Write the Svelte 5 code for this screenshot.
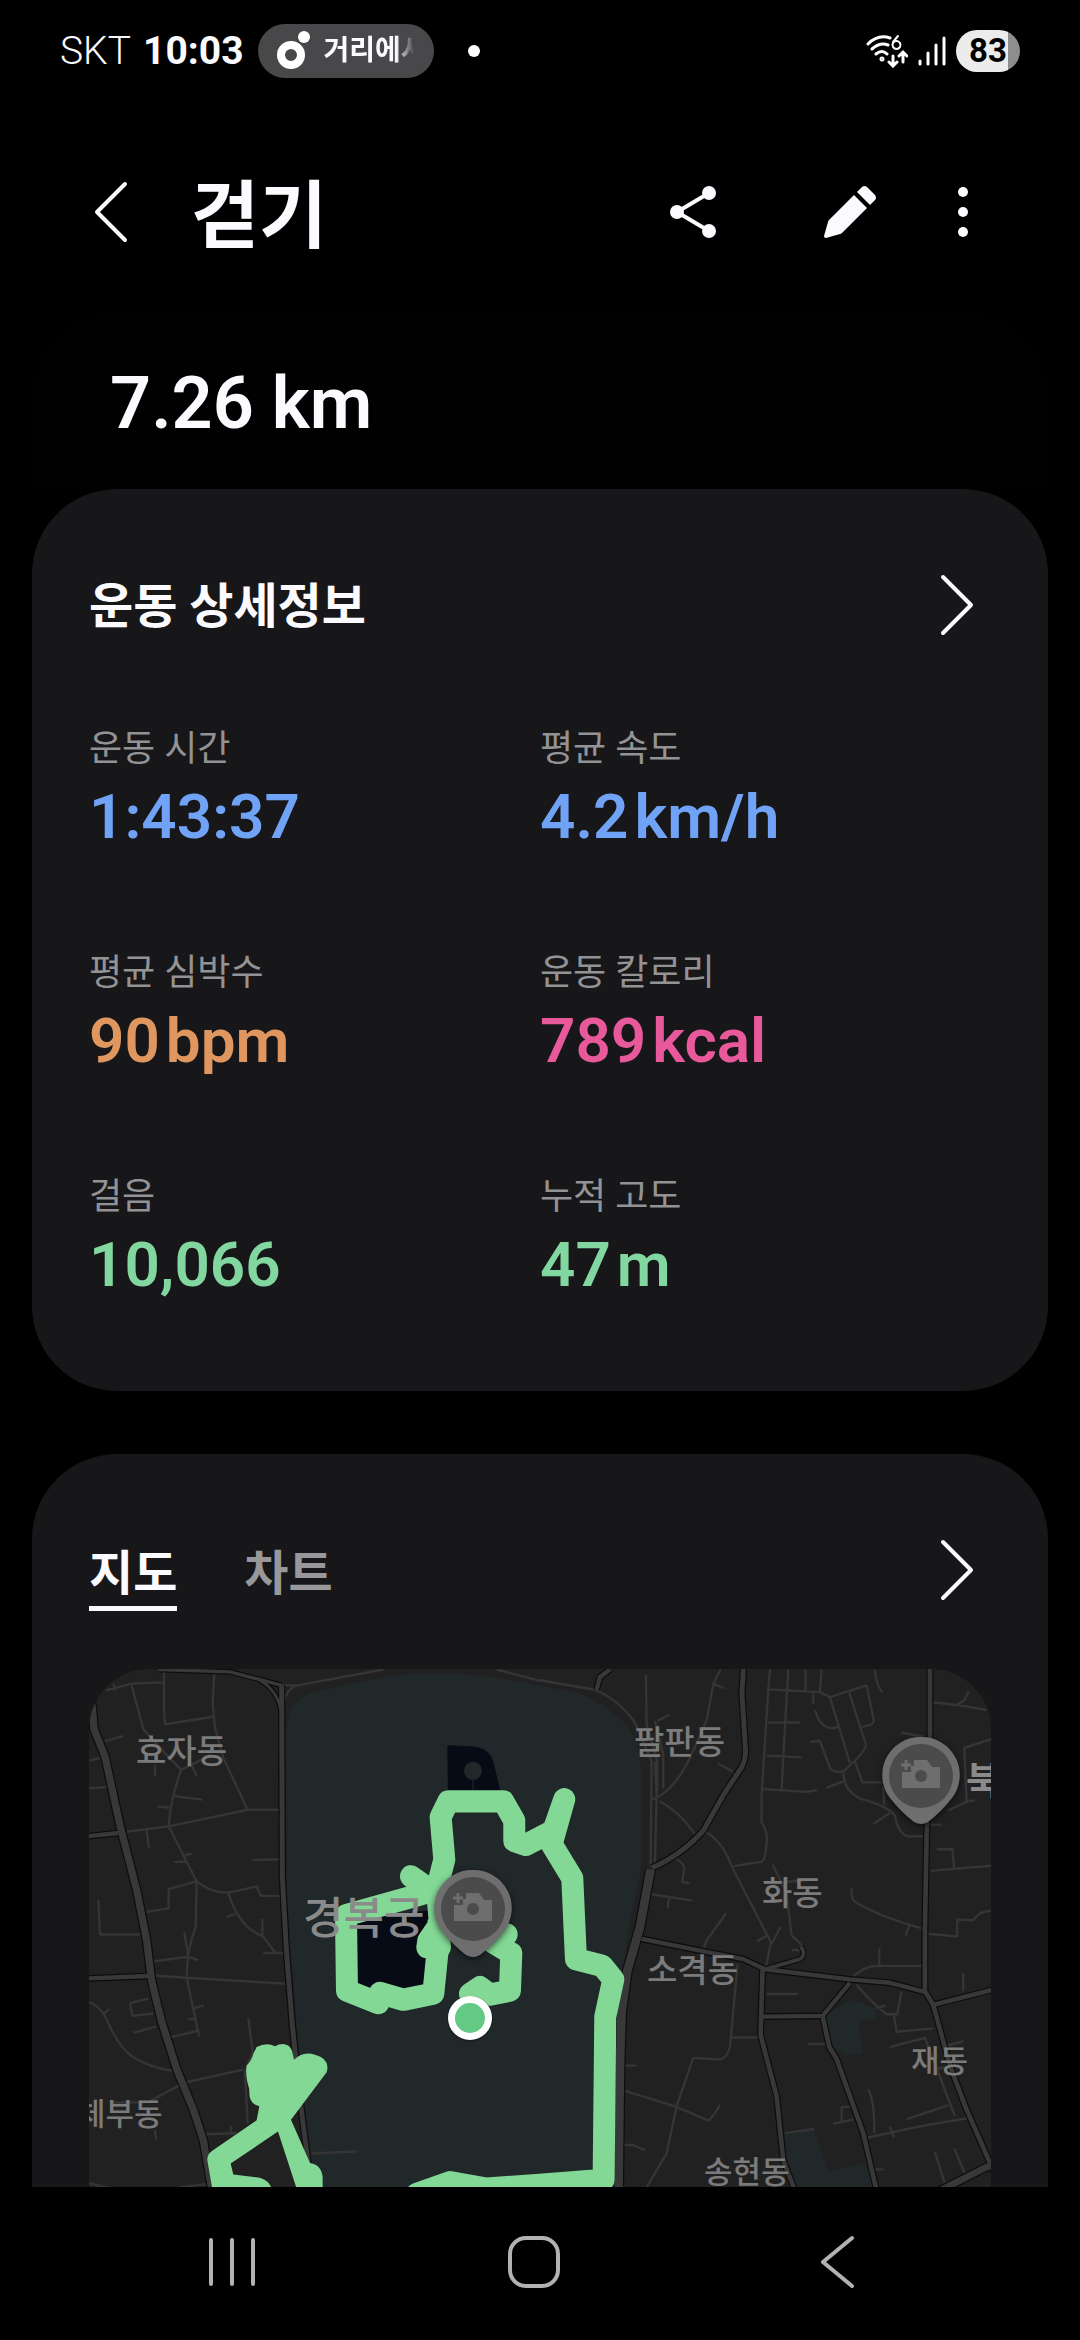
<script lang="ts">
  interface Stat {
    label: string;
    value: string;
    unit?: string;
    tone: string;
  }

  const stats: Stat[] = [
    { label: '운동 시간', value: '1:43:37', tone: 'blue' },
    { label: '평균 속도', value: '4.2', unit: 'km/h', tone: 'blue' },
    { label: '평균 심박수', value: '90', unit: 'bpm', tone: 'orange' },
    { label: '운동 칼로리', value: '789', unit: 'kcal', tone: 'pink' },
    { label: '걸음', value: '10,066', tone: 'green' },
    { label: '누적 고도', value: '47', unit: 'm', tone: 'green' }
  ];

  const tabs = ['지도', '차트'];
  let activeTab = $state('지도');

  // [path, width]
  const westRoads: [string, number][] = [
    ['M25 60L38 150L42 205L75 285L120 490L170 680L200 830L215 950L245 1070L290 1210L340 1330L370 1420L396 1570L410 1900', 22],
    ['M0 524L115 512', 13],
    ['M0 943L205 935', 13],
    ['M605 75L607 640L620 870L637 1080L660 1300L690 1530L730 1900', 15],
    ['M235 28L450 35L605 75', 10],
    ['M540 60Q592 90 603 150', 9]
  ];

  const eastRoads: [string, number][] = [
    ['M210 28L180 50L170 88', 13],
    ['M1170 0V230L1160 520L1155 800V980L1180 1020L1230 1200L1280 1330L1400 1600', 14],
    ['M1180 1020L1400 965', 13],
    ['M668 915L662 1110L710 1290L730 1480L765 1570L800 1900', 14],
    ['M668 1055L848 1053L930 955', 13],
    ['M848 1053L868 1145L890 1180L970 1400L1010 1570L1060 1900', 14],
    ['M675 915L780 885Q800 872 783 848', 11],
    ['M305 825L480 860L610 885L675 915L930 945L1050 955L1155 982', 13],
    ['M612 0L606 100L617 270Q616 305 598 328L550 400L490 505Q420 580 335 615', 15],
    ['M332 620L300 790L262 920L245 1040L240 1200L232 1900', 26],
    ['M1200 1570L1340 1500L1400 1480', 20]
  ];

  const westLanes = [
    'M78 90L155 70L250 66M252 28V150L255 190L400 168M403 40L398 125L405 200L430 290L503 443H600',
    'M155 75L190 205L250 270L303 325L395 280M75 240L130 225M27 298L60 290M27 380L80 376M100 70L105 90',
    'M303 325Q270 420 266 492L140 508M266 492L503 443M285 403L368 413M233 433L268 437M225 310V345M335 310L350 343',
    'M266 492L350 655L347 790Q320 860 320 940L358 1115M200 505L206 555M283 598L318 596M315 577L335 573M517 592L600 590',
    'M350 655Q395 690 445 688L530 670L543 698H600M350 655L266 678V735L200 745M445 688Q475 790 550 818L585 865M547 765V818M440 760L465 752M550 867H615',
    'M55 710L60 812H180M218 892L325 878L355 888M313 805L325 878M215 933L320 940L620 958M150 1015L205 1002M150 1015L157 1053L220 1046M343 1030L372 1022M325 1063L350 1062M160 1103L228 1085M265 1118L358 1096',
    'M27 1012Q65 1025 85 1075Q120 1150 160 1175Q210 1205 275 1215M72 1045L88 1033M315 1250L490 1212M505 1060L518 1160L495 1220L503 1370M95 1310L205 1308L300 1257M375 1403L470 1400M453 1378V1400M225 1390L228 1418M27 1548Q80 1562 130 1570M695 1460L828 1454M385 1550L300 1560',
    'M610 125Q625 75 665 73L910 28M605 75H665M1250 28L1380 62'
  ];

  const eastLanes = [
    'M0 60L165 88Q240 120 285 185L335 300L332 610M345 180L370 280V380M345 300L350 400L345 605M318 42L320 190L352 300V390',
    'M542 28L520 70L500 180L450 290Q400 390 338 412M520 70L552 83M352 180L390 162M360 418Q420 450 465 515M535 307L578 330M498 508Q550 540 575 610L693 835L678 910',
    'M690 28L685 90L665 400V480Q685 510 680 540Q678 590 665 597L580 610M688 87L840 95L870 110L980 75M745 28L735 200L725 382M797 28V90M845 28L840 95M685 185H780M680 283L785 288M670 382L800 390L832 385',
    'M870 110L930 305M825 148Q845 215 895 198M820 95V130M928 97L978 250Q980 270 910 330Q880 335 870 318L840 240L810 242M980 75L1002 180Q1000 195 965 197M945 300L967 362H1030M858 378L910 360M1005 30Q1005 60 1027 97M1085 215L1150 227',
    'M910 330Q910 385 960 410Q1040 430 1065 460Q1075 520 1110 522H1155M1030 375L1033 430M1000 485L1050 453M1180 125L1250 133L1340 148M1250 133L1272 120L1287 93M1360 232L1273 260L1280 420L1225 445M1305 415L1280 420M1170 487H1205',
    'M408 590Q435 600 432 620L427 657L448 660M335 693L457 712M387 705L383 735M558 750L500 830L490 855M698 605L740 690L755 815Q795 850 788 858H755M722 790L695 840M650 833L680 815M700 660L810 650',
    'M1190 560H1238L1242 615M1172 624L1360 608M937 675Q930 700 945 715Q1020 760 1150 795M1108 785L1097 815M1165 810L1252 818V768L1300 770Q1320 740 1360 742M935 940Q975 905 1010 905H1150M1018 853V905M1270 927V980M680 988H775',
    'M950 960Q990 1010 1040 1048H1072L1085 980M1010 1030L1038 1022M1062 1050L1070 1100L1180 1090M1050 1145L1155 1118L1245 1350M1100 1358L1225 1318M975 1415L1140 1380L1285 1355M985 1270Q1005 1310 1003 1400M1050 1380L1062 1413M1190 1210L1240 1200M1225 1140L1270 1128',
    'M593 900L570 1145Q560 1180 540 1182L460 1177L410 1320L380 1460L320 1560M570 1117H655M805 1136H855M250 1200H290M240 1270L410 1322L505 1363Q525 1345 540 1316M240 1435H280L315 1450M735 1400L823 1387M880 1372L940 1360M905 1365V1322H930M1185 1455L1215 1550M1243 1445L1275 1520M1005 1507H1032'
  ];

  const labels = [
    { text: '효자동', x: 47, y: 94, size: 'mid' },
    { text: '체부동', x: -12, y: 456, size: 'small' },
    { text: '팔판동', x: 545, y: 85, size: 'mid' },
    { text: '화동', x: 673, y: 236, size: 'mid' },
    { text: '소격동', x: 558, y: 313, size: 'mid' },
    { text: '재동', x: 822, y: 403, size: 'small' },
    { text: '송현동', x: 615, y: 514, size: 'small' },
    { text: '경복궁', x: 214, y: 265, size: 'large' },
    { text: '북', x: 877, y: 125, size: 'bold' }
  ];

  const pins = [
    { x: 384, y: 240 },
    { x: 832, y: 107 }
  ];
</script>

{#snippet chevron()}
  <svg class="chevron" viewBox="0 0 40 64" aria-hidden="true">
    <path d="M6 4L34 32L6 60" />
  </svg>
{/snippet}

<div class="screen">
  <div class="status-bar">
    <span class="carrier">SKT</span>
    <span class="clock">10:03</span>
    <div class="now-playing">
      <svg width="34" height="40" viewBox="0 0 34 40" aria-hidden="true">
        <circle cx="15" cy="24" r="10" fill="none" stroke="#fff" stroke-width="8" />
        <circle cx="28" cy="6" r="6" fill="#fff" />
      </svg>
      <span class="track">거리에서</span>
    </div>
    <span class="dot"></span>
    <div class="indicators">
      <svg width="42" height="34" viewBox="0 0 42 34" fill="none" stroke="#fff" stroke-width="3" stroke-linecap="round" aria-hidden="true">
        <path d="M2 10Q12 0 24 4M6 15Q14 8 22 11M10 20Q16 15 21 20" />
        <circle cx="16" cy="25" r="1" />
        <path d="M27 22V31M23 28L27 32L31 28M37 28V19M33 22L37 18L41 22" />
        <path d="M32 2L27 8M31 7a4 4 0 1 1 -1 0" stroke-width="2" />
      </svg>
      <svg width="28" height="30" viewBox="0 0 28 30" stroke="#fff" stroke-width="3" stroke-linecap="round" aria-hidden="true">
        <path d="M2 25V28M10 17V28M18 9V28M26 2V28" />
      </svg>
      <span class="battery">83</span>
    </div>
  </div>

  <header>
    <button class="back" aria-label="뒤로">
      <svg class="chevron" viewBox="0 0 40 64" aria-hidden="true">
        <path d="M34 4L6 32L34 60" />
      </svg>
    </button>
    <h1>걷기</h1>
    <button aria-label="공유">
      <svg width="52" height="56" viewBox="0 0 52 56" aria-hidden="true">
        <path d="M42 9L10 28L42 47" fill="none" stroke="#fafaff" stroke-width="4" />
        <g fill="#fafaff">
          <circle cx="42" cy="9" r="7" />
          <circle cx="10" cy="28" r="7" />
          <circle cx="42" cy="47" r="7" />
        </g>
      </svg>
    </button>
    <button aria-label="편집">
      <svg width="54" height="54" viewBox="0 0 54 54" fill="#fafaff" aria-hidden="true">
        <path d="M31 10L44 23L19 48Q18 49 17 49L3 53Q1 53 1 51L5 37Q5 36 6 35Z" />
        <path d="M34 7L39 2Q41 0 44 2L52 10Q54 13 52 15L47 20Z" />
      </svg>
    </button>
    <button aria-label="더보기">
      <svg width="12" height="52" viewBox="0 0 12 52" fill="#fafaff" aria-hidden="true">
        <circle cx="6" cy="6" r="5" />
        <circle cx="6" cy="26" r="5" />
        <circle cx="6" cy="46" r="5" />
      </svg>
    </button>
  </header>

  <main>
    <section class="summary">7.26 km</section>

    <section class="card">
      <div class="card-head">
        <h2>운동 상세정보</h2>
        <button aria-label="운동 상세정보 보기">{@render chevron()}</button>
      </div>
      <dl>
        {#each stats as stat}
          <div class="stat">
            <dt>{stat.label}</dt>
            <dd class={stat.tone}>
              <span>{stat.value}</span>
              {#if stat.unit}<span>{stat.unit}</span>{/if}
            </dd>
          </div>
        {/each}
      </dl>
    </section>

    <section class="card">
      <div class="card-head">
        <div class="tabs" role="tablist">
          {#each tabs as tab}
            <button
              class="tab"
              class:active={tab === activeTab}
              role="tab"
              aria-selected={tab === activeTab}
              onclick={() => (activeTab = tab)}
            >{tab}</button>
          {/each}
        </div>
        <button aria-label="지도 보기">{@render chevron()}</button>
      </div>

      <div class="map">
        <svg viewBox="0 0 902 620" role="img" aria-label="걷기 경로">
          <rect width="902" height="620" fill="#212121" />
          <g transform="translate(-9 -9) scale(0.3333 0.338)" fill="none" stroke-linejoin="round">
            <path class="park" d="M618 230Q620 115 700 95L900 52Q1120 20 1380 75L1500 100Q1620 150 1665 230L1685 320V610L1645 800L1620 1000L1600 1900H730L650 1080L620 700Z" />
            <g transform="translate(1380 0)">
              <path class="park" d="M935 1005L1010 1030L1005 1060L955 1072L970 1165L925 1170L870 1145L850 1055Z" />
              <path class="park" d="M735 1400L823 1387L865 1515L980 1485L1010 1570V1900H790L740 1500Z" />
            </g>
            <path class="lane" d={westLanes.join('')} />
            <g transform="translate(1380 0)">
              <path class="lane" d={eastLanes.join('')} />
              {#each eastRoads as [d, width]}
                <path {d} stroke="#0c0c0c" stroke-width={width + 7} />
              {/each}
              {#each eastRoads as [d, width]}
                <path {d} stroke="#383838" stroke-width={width} />
              {/each}
            </g>
            {#each westRoads as [d, width]}
              <path {d} stroke="#0c0c0c" stroke-width={width + 7} />
            {/each}
            {#each westRoads as [d, width]}
              <path {d} stroke="#383838" stroke-width={width} />
            {/each}

            <path class="water" d="M1102 256Q1102 250 1110 252L1180 256Q1230 262 1240 300L1262 390H1104Z" />
            <circle class="park" cx="1179" cy="328" r="27" />
            <path d="M1179 350V390" stroke="#20282a" stroke-width="3" />
            <path class="water" d="M820 770L1050 740L1045 980H820Z" />

            <g stroke="#83d896" stroke-width="66" stroke-linecap="round">
              <path d="M1075 840L1060 987L970 1005L900 985L895 1015L801 978L798 755L980 705L1070 680L1093 590L1082 465L1105 418H1270L1303 475V535L1338 547L1420 505L1453 412L1415 545L1477 645L1488 885L1567 905L1600 945L1576 1055L1571 1538L1380 1553L1220 1564L1110 1545L1010 1580" />
              <path d="M993 640L1065 690M1072 690L1080 780L1045 830L1042 850M1075 780L1080 850M1280 812L1238 835L1294 868L1290 978L1230 990L1200 968L1170 988" />
            </g>
            <path fill="#83d896" d="M530 1145Q560 1130 585 1143Q620 1125 636 1155L642 1183Q670 1155 705 1168Q752 1180 740 1220L633 1360L690 1488Q730 1495 728 1540V1570H652L594 1395L452 1490L460 1522L540 1532Q575 1545 575 1570H398L382 1480Q380 1462 400 1450L530 1362L538 1320Q505 1315 508 1270Q495 1230 500 1200Q515 1185 520 1165Z" />
          </g>

          <circle cx="381" cy="350" r="23" fill="#111" opacity="0.4" />
          <circle cx="381" cy="349" r="22" fill="#fff" />
          <circle cx="381" cy="349" r="15" fill="#63ca83" />

          {#each labels as label}
            <text class={label.size} x={label.x} y={label.y}>{label.text}</text>
          {/each}

          {#each pins as pin}
            <g class="pin" transform={`translate(${pin.x} ${pin.y})`}>
              <path d="M0 -39A38 38 0 0 1 31 22Q20 36 7 46Q0 50 -7 46Q-20 36 -31 22A38 38 0 0 1 0 -39Z" fill="#6e6e6e" />
              <circle r="32" fill="#4b4b4b" />
              <path d="M-7 -16H6L11 -9H19V12H-19V-4H-10V-10H-7Z" fill="#6e6e6e" />
              <circle cy="0" r="6" fill="#4b4b4b" />
              <path d="M-15 -16V-6M-20 -11H-10" stroke="#6e6e6e" stroke-width="3" />
            </g>
          {/each}
        </svg>
      </div>
    </section>
  </main>

  <nav>
    <button aria-label="최근 앱">
      <svg width="52" height="56" viewBox="0 0 52 56" aria-hidden="true">
        <path d="M5 6V50M26 6V50M47 6V50" />
      </svg>
    </button>
    <button aria-label="홈">
      <svg width="56" height="56" viewBox="0 0 56 56" aria-hidden="true">
        <rect x="4" y="4" width="48" height="48" rx="16" />
      </svg>
    </button>
    <button aria-label="이전">
      <svg width="40" height="56" viewBox="0 0 40 56" aria-hidden="true">
        <path d="M35 4L6 28L35 52" />
      </svg>
    </button>
  </nav>
</div>

<style>
  :global(body) {
    margin: 0;
    background: #000;
  }

  .screen {
    display: flex;
    flex-direction: column;
    height: 100vh;
    overflow: hidden;
    background: #000;
    color: #fafaff;
    font-family: Roboto, 'Noto Sans CJK KR', sans-serif;
  }

  button {
    display: flex;
    align-items: center;
    justify-content: center;
    padding: 0;
    border: none;
    background: none;
    color: inherit;
    font: inherit;
    cursor: pointer;
  }

  h1,
  h2,
  dl,
  dd {
    margin: 0;
  }

  .status-bar {
    display: flex;
    flex-shrink: 0;
    align-items: center;
    height: 101px;
    padding: 0 60px 10px;
    font-size: 39px;
  }

  .carrier {
    font-weight: 300;
  }

  .clock {
    margin-left: 12px;
    font-weight: 700;
  }

  .now-playing {
    display: flex;
    align-items: center;
    gap: 14px;
    box-sizing: border-box;
    width: 176px;
    height: 54px;
    margin-left: 14px;
    padding-left: 18px;
    border-radius: 27px;
    background: #48484a;
  }

  .track {
    width: 90px;
    overflow: hidden;
    white-space: nowrap;
    font-size: 28px;
    font-weight: 700;
    line-height: 36px;
    mask-image: linear-gradient(to right, #000 80%, transparent);
  }

  .dot {
    width: 12px;
    height: 12px;
    margin-left: 34px;
    border-radius: 50%;
    background: #fff;
  }

  .indicators {
    display: flex;
    align-items: center;
    gap: 10px;
    margin-left: auto;
  }

  .battery {
    width: 64px;
    height: 42px;
    border-radius: 21px;
    background: linear-gradient(to right, #ececec 81%, #8e8e8e 81%);
    color: #000;
    font-size: 33px;
    font-weight: 700;
    line-height: 42px;
    text-align: center;
  }

  .chevron {
    width: 40px;
    height: 64px;
    fill: none;
    stroke: #fafaff;
    stroke-width: 4;
    stroke-linecap: round;
    stroke-linejoin: round;
  }

  header {
    display: flex;
    flex-shrink: 0;
    align-items: center;
    gap: 60px;
    height: 202px;
    padding: 0 91px;
  }

  h1 {
    flex: 1;
    padding-bottom: 6px;
    font-size: 74px;
    font-weight: 700;
  }

  header button {
    min-width: 52px;
    height: 96px;
  }

  header button:nth-last-of-type(2) {
    margin-left: 44px;
  }

  header .back {
    min-width: 40px;
  }

  main {
    flex: 1;
    min-height: 0;
    padding: 0 32px;
    overflow: hidden;
  }

  .summary {
    padding: 6px 78px 0;
    border-radius: 85px 85px 0 0;
    background: #010101;
    font-size: 72px;
    font-weight: 600;
    line-height: 170px;
  }

  .card {
    margin-bottom: 63px;
    padding: 56px 57px 91px;
    border-radius: 85px;
    background: #171719;
  }

  .card-head {
    display: flex;
    align-items: center;
    justify-content: space-between;
    height: 120px;
  }

  .card-head > button {
    margin-right: 14px;
  }

  h2 {
    padding-bottom: 6px;
    font-size: 48px;
    font-weight: 700;
  }

  dl {
    display: grid;
    grid-template-columns: 1fr 1fr;
    row-gap: 99px;
    margin-top: 62px;
  }

  dt {
    color: #939395;
    font-size: 36px;
    line-height: 44px;
  }

  dd {
    display: flex;
    gap: 6px;
    margin-top: 11px;
    font-size: 62px;
    font-weight: 600;
    line-height: 70px;
  }

  .blue {
    color: #70a2f6;
  }

  .orange {
    color: #e0975f;
  }

  .pink {
    color: #e8599c;
  }

  .green {
    color: #82d6a0;
  }

  .tabs {
    display: flex;
    gap: 67px;
  }

  .tab {
    padding-top: 12px;
    border-bottom: 5px solid transparent;
    color: #98989a;
    font-size: 48px;
    font-weight: 700;
    line-height: 65px;
  }

  .tab.active {
    border-color: #fafaff;
    color: #fafaff;
  }

  .map {
    margin-top: 39px;
    border-radius: 60px;
    overflow: hidden;
  }

  .map svg {
    display: block;
    width: 100%;
  }

  .park {
    fill: #20282a;
  }

  .water {
    fill: #070b15;
  }

  .lane {
    stroke: #353535;
    stroke-width: 7;
  }

  .map text {
    fill: #7b7b7b;
    font-family: 'Noto Sans CJK KR', sans-serif;
    font-size: 33px;
    font-weight: 500;
  }

  .map .small {
    font-size: 31px;
  }

  .map .large {
    fill: #8a8a8a;
    font-size: 44px;
  }

  .map .bold {
    fill: #8a8a8a;
    font-size: 38px;
    font-weight: 700;
  }

  .pin {
    filter: drop-shadow(0 2px 3px rgba(0, 0, 0, 0.6));
  }

  nav {
    display: flex;
    flex-shrink: 0;
    align-items: center;
    box-sizing: border-box;
    height: 153px;
    padding: 0 92px 4px 81px;
    background: #000;
  }

  nav button {
    flex: 1;
    height: 96px;
  }

  nav svg {
    fill: none;
    stroke: #b2b2b2;
    stroke-width: 4;
    stroke-linecap: round;
    stroke-linejoin: round;
  }
</style>
